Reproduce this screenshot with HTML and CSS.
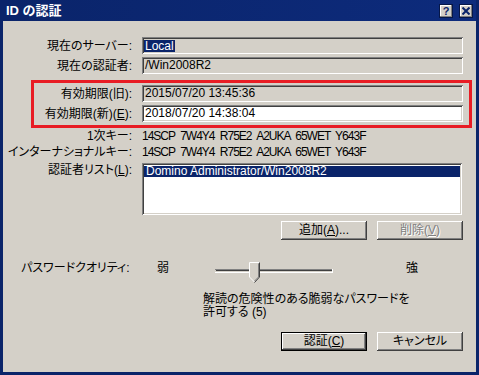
FILE: index.html
```html
<!DOCTYPE html>
<html>
<head>
    <title>ID の認証</title>
    <link rel="stylesheet" href="styles.css">
</head>
<body>
<div class="window">
    <div class="titlebar">
        <span class="title">ID の認証</span>
        <div class="tb-buttons">
            <span class="tb-btn help">?</span>
            <span class="tb-btn">
                <svg width="8" height="8" viewBox="0 0 8 8"><path d="M0.5 0.5 L7.5 7.5 M7.5 0.5 L0.5 7.5" stroke="#0a246a" stroke-width="2" fill="none"/></svg>
            </span>
        </div>
    </div>

    <div class="client">
        <div class="row">
            <span class="label">現在のサーバー:</span>
            <div class="field ro"><span class="sel">Local</span></div>
        </div>
        <div class="row">
            <span class="label">現在の認証者:</span>
            <div class="field ro">/Win2008R2</div>
        </div>

        <div class="highlight">
            <div class="row">
                <span class="label">有効期限(旧):</span>
                <div class="field ro">2015/07/20 13:45:36</div>
            </div>
            <div class="row">
                <span class="label">有効期限(新)(<u>E</u>):</span>
                <div class="field">2018/07/20 14:38:04</div>
            </div>
        </div>

        <div class="info">
            <span class="label">1次キー:</span>
            <span class="value key">14SCP 7W4Y4 R75E2 A2UKA 65WET Y643F</span>
        </div>
        <div class="info">
            <span class="label">インターナショナルキー:</span>
            <span class="value key">14SCP 7W4Y4 R75E2 A2UKA 65WET Y643F</span>
        </div>

        <div class="list-row">
            <span class="label">認証者リスト(<u>L</u>):</span>
            <div class="listbox">
                <div class="item selected">Domino Administrator/Win2008R2</div>
            </div>
        </div>

        <div class="btn-row">
            <button class="btn">追加(<u>A</u>)...</button>
            <button class="btn" disabled>削除(<u>V</u>)</button>
        </div>

        <div class="quality">
            <span class="q-label">パスワードクオリティ:</span>
            <span class="q-weak">弱</span>
            <svg class="slider" width="118" height="22" viewBox="0 0 118 22">
                <rect x="0" y="7" width="118" height="1" fill="#808080"/>
                <rect x="1" y="8" width="116" height="1" fill="#404040"/>
                <rect x="0" y="10" width="118" height="1" fill="#ffffff"/>
                <rect x="117" y="7" width="1" height="4" fill="#ffffff"/>
                <polygon points="34,0 45,0 45,15 39.5,20.5 34,15" fill="#d4d0c8"/>
                <polyline points="34.5,15 34.5,0.5 44.5,0.5" stroke="#ffffff" fill="none"/>
                <polyline points="34.5,15 39.5,20" stroke="#ffffff" fill="none"/>
                <polyline points="44.5,0.5 44.5,15 39.5,20.5" stroke="#404040" fill="none"/>
                <polyline points="43.5,1.5 43.5,15 39.5,19" stroke="#808080" fill="none"/>
            </svg>
            <span class="q-strong">強</span>
        </div>

        <p class="note">解読の危険性のある脆弱なパスワードを<br>許可する (5)</p>

        <div class="btn-row bottom">
            <button class="btn default">認証(<u>C</u>)</button>
            <button class="btn">キャンセル</button>
        </div>
    </div>
</div>
</body>
</html>
```

FILE: styles.css
```css
body { margin: 0; font-family: "Liberation Sans", "Noto Sans CJK JP", sans-serif; font-size: 12px; color: #000; }

.window { width: 479px; height: 375px; box-sizing: border-box; background: #0a246a; padding: 0 3px 3px 3px; display: flex; flex-direction: column; }
.titlebar { height: 21px; flex: none; display: flex; align-items: center; justify-content: space-between; padding: 0 3px; background: linear-gradient(to right, #0a246a, #0d2b7c); }
.title { color: #fff; font-weight: bold; font-size: 13px; line-height: 16px; font-feature-settings: "palt"; }
.tb-buttons { display: flex; gap: 6px; margin-top: 1px; }
.tb-btn { width: 14px; height: 14px; box-sizing: border-box; border: 1px solid #061748; background: #d4d0c8; box-shadow: inset -1px -1px 0 #808080, inset 1px 1px 0 #fff; display: flex; align-items: center; justify-content: center; }
.tb-btn.help { color: #0a246a; font-weight: bold; font-size: 11px; line-height: 12px; }

.client { flex: 1; background: #d4d0c8; padding-top: 16px; display: flex; flex-direction: column; overflow: hidden; }

.label { flex: 1; text-align: right; padding-right: 10px; white-space: nowrap; line-height: 14px; font-feature-settings: "palt"; }

.row { display: flex; align-items: center; height: 17px; margin-right: 13px; }
.row + .row { margin-top: 3px; }
.field { width: 321px; height: 17px; box-sizing: border-box; padding-left: 3px; line-height: 17px; background: #fff; white-space: nowrap;
    box-shadow: inset 1px 1px 0 #808080, inset -1px -1px 0 #fff, inset 2px 2px 0 #404040, inset -2px -2px 0 #d4d0c8; }
.field.ro { background: #d4d0c8; }
.sel { display: inline-block; background: #0a246a; color: #fff; line-height: 12px; padding: 0 1px; margin-left: -1px; vertical-align: middle; }

.highlight { margin: 6px 4px 0 28px; border: 3px solid #e81c24; padding: 2px 6px 3px 0; }
.highlight .row { margin-right: 0; }

.info { display: flex; align-items: center; height: 16px; margin-right: 13px; }
.value { width: 321px; white-space: nowrap; }
.key { letter-spacing: -1px; word-spacing: 3px; }

.list-row { display: flex; align-items: flex-start; margin: 3px 14px 0 0; }
.listbox { width: 320px; height: 52px; box-sizing: border-box; background: #fff; padding: 3px 2px 2px 2px;
    box-shadow: inset 1px 1px 0 #808080, inset -1px -1px 0 #fff, inset 2px 2px 0 #404040, inset -2px -2px 0 #d4d0c8; }
.item { line-height: 11px; height: 11px; padding-left: 2px; white-space: nowrap; }
.item.selected { background: #0a246a; color: #fff; }

.btn-row { display: flex; justify-content: flex-end; gap: 10px; margin: 6px 13px 0 0; }
.btn { width: 86px; height: 19px; padding: 0; border: none; background: #d4d0c8; font-family: inherit; font-size: 12px; line-height: 17px; color: #000; font-feature-settings: "palt";
    box-shadow: inset -1px -1px 0 #404040, inset 1px 1px 0 #fff, inset -2px -2px 0 #808080; }
.btn:disabled { color: #808080; text-shadow: 1px 1px 0 #fff; }
.btn.default { border: 1px solid #000; box-shadow: inset -1px -1px 0 #404040, inset 1px 1px 0 #fff, inset -2px -2px 0 #808080; }
.btn-row.bottom { margin-top: 13px; }

.quality { display: flex; align-items: flex-start; margin-top: 22px; padding-left: 18px; height: 22px; }
.q-label { width: 136px; line-height: 12px; white-space: nowrap; font-feature-settings: "palt"; }
.q-weak { width: 58px; line-height: 12px; }
.slider { display: block; }
.q-strong { margin-left: 73px; line-height: 12px; }

.note { margin: 9px 0 0 200px; line-height: 13px; font-feature-settings: "palt"; }
```
